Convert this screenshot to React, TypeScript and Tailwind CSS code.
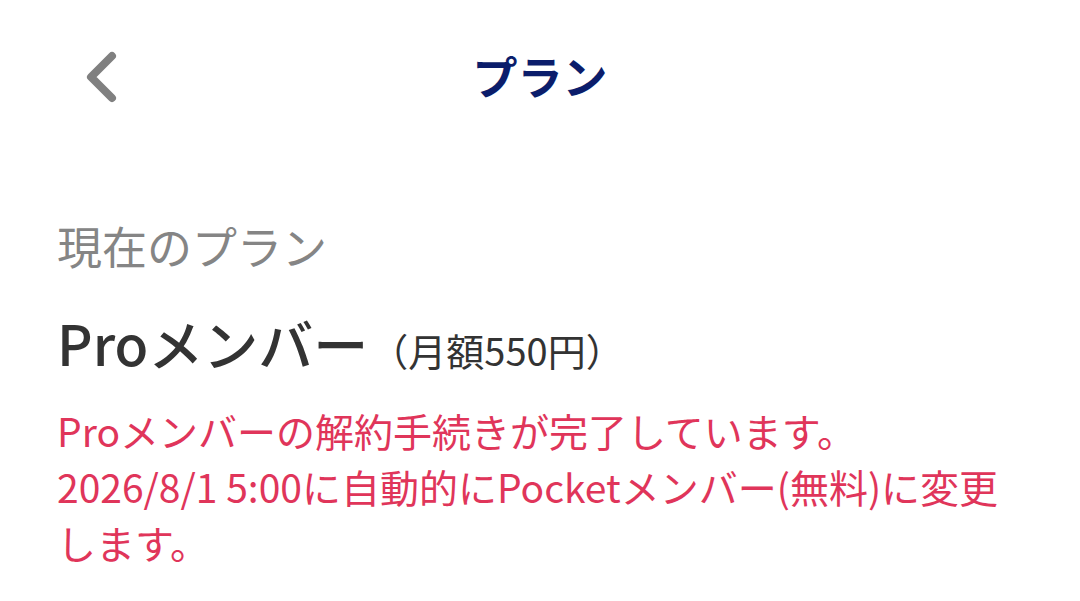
import * as React from "react";

const jp = { fontFamily: '"Noto Sans CJK JP", "Noto Sans", sans-serif' };

export default function App() {
    return (
        <div className="h-[601px] w-[1080px] overflow-hidden bg-white" style={jp}>
            {/* Header */}
            <div className="relative flex h-[152px] items-start justify-center pt-[44px]">
                <button type="button" className="absolute left-[74px] top-[46px] p-1">
                    <svg width="44" height="54" viewBox="0 0 44 54" fill="none">
                        <path
                            d="M34 6 L13 27 L34 48"
                            stroke="#808080"
                            strokeWidth="8"
                            strokeLinecap="round"
                            strokeLinejoin="round"
                        />
                    </svg>
                </button>
                <h1 className="text-[45px] font-bold leading-[64px] text-[#0b1d6b]">プラン</h1>
            </div>

            {/* Current plan */}
            <div className="px-[57px] pt-[64px]">
                <div className="text-[45px] leading-[60px] text-[#858585]">現在のプラン</div>

                <div className="mt-[34px] flex items-baseline">
                    <span className="text-[55px] font-medium leading-[64px] text-[#333333]">Proメンバー</span>
                    <span className="ml-[2px] text-[38px] text-[#333333]">（月額550円）</span>
                </div>

                <p className="mt-[24px] text-[39px] leading-[56px] text-[#e0355a]">
                    Proメンバーの解約手続きが完了しています。
                    <br />
                    2026/8/1 5:00に自動的にPocketメンバー(無料)に変更します。
                </p>
            </div>
        </div>
    );
}
